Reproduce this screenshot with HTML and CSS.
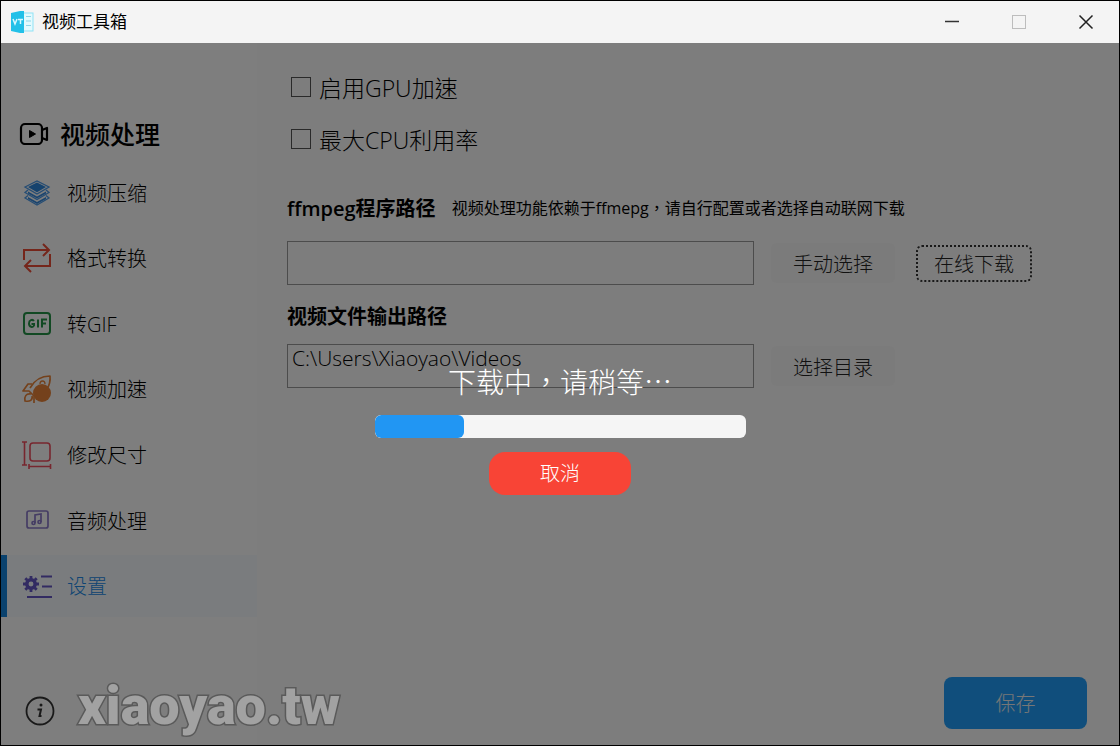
FILE: index.html
```html
<!DOCTYPE html>
<html lang="zh-Hant">
<head>
<meta charset="utf-8">
<meta name="viewport" content="width=device-width, initial-scale=1">
<title>视频工具箱</title>
<link rel="stylesheet" href="styles.css">
</head>
<body>
<div class="window">
  <header class="titlebar">
    <svg class="app-icon" viewBox="0 0 24 24" aria-hidden="true">
      <rect x="12" y="3" width="11" height="18" fill="#e4fafe" stroke="#8fe2f5"/>
      <path d="M16 6.500h5M16 11h5M16 15.500h5" fill="none" stroke="#8fd6e8"/>
      <path d="M1 3 10 1h4v22h-4L1 21z" fill="#22c0e8"/>
      <path d="m3 9 2 5 2-5M8 9.500h5M10.500 9.500V14" fill="none" stroke="#d8f7ff" stroke-width="1.500"/>
    </svg>
    <span class="app-name">视频工具箱</span>
    <div class="window-controls">
      <button class="control" type="button" aria-label="最小化"><svg viewBox="0 0 16 16"><path d="M1 7.500h14" stroke="#333" stroke-width="1.500"/></svg></button>
      <button class="control" type="button" aria-label="最大化" disabled><svg viewBox="0 0 16 16"><rect x="1.500" y="1.500" width="13" height="13" fill="none" stroke="#bdbdbd"/></svg></button>
      <button class="control" type="button" aria-label="关闭"><svg viewBox="0 0 16 16"><path d="m1.500 1.500 13 13m0-13-13 13" stroke="#222" stroke-width="1.500"/></svg></button>
    </div>
  </header>

  <div class="body">
    <aside class="sidebar">
      <h1 class="brand">
        <svg class="brand-icon" viewBox="0 0 32 24" fill="none" stroke="#000" stroke-width="2.200" aria-hidden="true">
          <rect x="3" y="3" width="21" height="20" rx="4"/>
          <path d="m24 9 5-2v12l-5-2" stroke-linejoin="round"/>
          <path d="m11.500 9.500 6 3.500-6 3.500z" fill="#000" stroke-width="1"/>
        </svg>
        视频处理
      </h1>
      <nav class="nav">
        <a class="nav-item" href="#compress">
          <svg class="nav-icon" viewBox="0 0 30 30" fill="none" stroke="#4c9ae8" stroke-width="1.300" aria-hidden="true">
            <path d="m3 10 12-6 12 6-12 7z"/><path d="m6 10 9-4.500 9 4.500-9 5.200z" fill="#2d86dd" stroke="none"/>
            <path d="m6 13-3 2.500 12 7 12-7-3-2.500" /><path d="m6 14.500 9 5 9-5v2l-9 5-9-5z" fill="#3689dc" stroke="none"/>
            <path d="m6 18.500-3 2.500 12 7 12-7-3-2.500"/><path d="m6 20 9 5 9-5v2l-9 5-9-5z" fill="#3689dc" stroke="none"/>
          </svg>
          视频压缩
        </a>
        <a class="nav-item" href="#convert">
          <svg class="nav-icon" viewBox="0 0 30 30" fill="none" stroke="#ea4c36" stroke-width="2" aria-hidden="true">
            <path d="M2 17V7h25M21 1l6 6-6 6M28 11v12H3M9 17l-6 6 6 6"/>
          </svg>
          格式转换
        </a>
        <a class="nav-item" href="#gif">
          <svg class="nav-icon" viewBox="0 0 30 30" fill="none" stroke="#259347" stroke-width="2" aria-hidden="true">
            <rect x="2" y="5" width="26" height="21" rx="3"/>
            <path d="M12 13c-1.500-2-5-1.200-5 2.500s4 4.500 5 2V16H9.500M16 11.500v8M20 19.500v-8h5M20 15.500h4"/>
          </svg>
          转GIF
        </a>
        <a class="nav-item" href="#speed">
          <svg class="nav-icon" viewBox="0 0 30 30" fill="none" stroke="#e88338" stroke-width="1.700" stroke-linejoin="round" aria-hidden="true">
            <path d="M8 14c4-7 11-12 20-12 .5 5-.5 9-3 13"/>
            <path d="M10 10H6l-5 7h6l5 5v7"/>
            <circle cx="20" cy="19" r="9" fill="#e88338" stroke="none"/>
            <path d="M18 10c0-4 5-4 5 0" stroke-width="1.300"/>
            <path d="M9 20c-5-1-7 3-6 7 5 1 8-1 7-5"/>
          </svg>
          视频加速
        </a>
        <a class="nav-item" href="#resize">
          <svg class="nav-icon" viewBox="0 0 30 30" fill="none" stroke="#ee4c5c" stroke-width="1.600" aria-hidden="true">
            <rect x="8" y="3" width="20" height="18" rx="3"/>
            <path d="M0 2h5M0 25h5M2.500 2v23M7 24v5M28.500 24v5M7 26.500h21"/>
          </svg>
          修改尺寸
        </a>
        <a class="nav-item" href="#audio">
          <svg class="nav-icon" viewBox="0 0 30 30" fill="none" stroke="#8b7ac8" stroke-width="1.700" aria-hidden="true">
            <rect x="5" y="6" width="21" height="17" rx="2"/>
            <path d="M13 18v-8l6-1v8"/><circle cx="11.500" cy="18" r="1.500"/><circle cx="17.500" cy="17" r="1.500"/>
          </svg>
          音频处理
        </a>
        <a class="nav-item is-active" href="#settings" aria-current="page">
          <svg class="nav-icon" viewBox="0 0 30 30" fill="none" stroke="#6457c4" stroke-width="2" aria-hidden="true">
            <circle cx="9" cy="13" r="4.200" stroke-width="3.500"/>
            <path d="M9 5v3M9 18v3M1 13h3M14 13h3M3.300 7.300l2 2M12.700 16.700l2 2M14.700 7.300l-2 2M5.300 16.700l-2 2" stroke-width="2.800"/>
            <path d="M19 5.500h11M20 15.500h10M5 26h25"/>
          </svg>
          设置
        </a>
      </nav>
      <div class="sidebar-footer">
        <button class="info" type="button" aria-label="关于">
          <svg viewBox="0 0 30 30" fill="none" stroke="#333" stroke-width="1.800" aria-hidden="true">
            <circle cx="15" cy="15" r="13.500"/>
            <circle cx="16" cy="9" r="1.500" fill="#333" stroke="none"/>
            <path d="M12.500 13.500H16l-1.500 6.500h2" stroke-width="2"/>
          </svg>
        </button>
      </div>
    </aside>

    <main class="main">
      <div class="options">
        <label class="check"><input type="checkbox">启用GPU加速</label>
        <label class="check"><input type="checkbox">最大CPU利用率</label>
      </div>

      <div class="field">
        <div class="field-head">
          <label class="field-title" for="ffmpeg">ffmpeg程序路径</label>
          <span class="field-hint">视频处理功能依赖于ffmepg，请自行配置或者选择自动联网下载</span>
        </div>
        <div class="field-row">
          <input class="path" id="ffmpeg" type="text">
          <button class="plain" type="button">手动选择</button>
          <button class="plain is-focused" type="button">在线下载</button>
        </div>
      </div>

      <div class="field">
        <div class="field-head">
          <label class="field-title" for="output">视频文件输出路径</label>
        </div>
        <div class="field-row">
          <input class="path" id="output" type="text" value="C:\Users\Xiaoyao\Videos">
          <button class="plain" type="button">选择目录</button>
        </div>
      </div>

      <button class="save" type="button">保存</button>
    </main>

    <div class="overlay" role="dialog" aria-labelledby="status">
      <label class="status" id="status" for="download">下载中，请稍等…</label>
      <progress class="bar" id="download" max="100" value="24"></progress>
      <button class="cancel" type="button">取消</button>
    </div>
    <div class="watermark">xiaoyao.tw</div>
  </div>
</div>
</body>
</html>
```

FILE: styles.css
```css
* {
  box-sizing: border-box;
}

body {
  margin: 0;
  font-family: "Open Sans", "Noto Sans CJK TC", sans-serif;
  font-weight: 300;
  font-size: 20px;
  color: #000;
}

button,
input {
  font: inherit;
  color: inherit;
}

button {
  padding: 0;
  border: 0;
  background: none;
}

.window {
  display: flex;
  flex-direction: column;
  min-height: 100vh;
  border: 1px solid #000;
  background: #fafafa;
}

.titlebar {
  display: flex;
  align-items: center;
  gap: 8px;
  height: 42px;
  padding-left: 9px;
  background: #f4f4f4;
}

.app-icon {
  width: 24px;
  height: 24px;
}

.app-name {
  padding-bottom: 3px;
  font-size: 17px;
  font-weight: 400;
}

.window-controls {
  display: flex;
  align-self: stretch;
  margin-left: auto;
}

.control {
  display: grid;
  place-items: center;
  width: 67px;
}

.control svg {
  width: 16px;
  height: 16px;
}

.body {
  position: relative;
  flex: 1;
  display: flex;
}

/* Sidebar */

.sidebar {
  display: flex;
  flex-direction: column;
  flex: none;
  width: 256px;
  padding-top: 70px;
  background: #fdfdfd;
}

.brand {
  display: flex;
  align-items: center;
  gap: 10px;
  height: 40px;
  margin: 0 0 8px;
  padding-left: 17px;
  font-size: 25px;
  font-weight: 500;
}

.brand-icon {
  width: 32px;
  height: 24px;
}

.nav {
  flex: 1;
  display: flex;
  flex-direction: column;
  justify-content: space-between;
}

.nav-item {
  display: flex;
  align-items: center;
  gap: 15px;
  height: 62px;
  padding-left: 15px;
  border-left: 6px solid transparent;
  color: #000;
  text-decoration: none;
}

.nav-item.is-active {
  border-left-color: #1585dc;
  background: #f4f9fd;
  color: #2189e6;
}

.nav-icon {
  flex: none;
  width: 30px;
  height: 30px;
}

.sidebar-footer {
  height: 128px;
  padding: 79px 0 0 24px;
}

.info svg {
  display: block;
  width: 30px;
  height: 30px;
}

/* Settings form */

.main {
  flex: 1;
  display: flex;
  flex-direction: column;
  min-width: 0;
  padding: 28px 32px 16px 30px;
}

.options {
  display: grid;
  justify-items: start;
  gap: 20px;
  margin-bottom: 36px;
  padding-left: 4px;
}

.check {
  display: flex;
  align-items: center;
  gap: 8px;
  height: 32px;
  font-size: 23px;
}

.check input {
  appearance: none;
  width: 20px;
  height: 20px;
  margin: 0;
  border: 1px solid #555;
}

.field {
  margin-bottom: 14px;
}

.field-head {
  display: flex;
  align-items: center;
  gap: 16px;
  height: 32px;
  margin-bottom: 18px;
}

.field + .field .field-head {
  margin-bottom: 13px;
}

.field-title {
  font-weight: 600;
}

.field-hint {
  font-size: 16px;
  font-weight: 400;
}

.field-row {
  display: flex;
  align-items: center;
  gap: 17px;
}

.path {
  flex: 0 1 467px;
  min-width: 0;
  height: 44px;
  padding: 0 4px 16px;
  border: 1px solid #999;
  border-radius: 0;
  background: transparent;
  font-size: 21px;
}

.plain {
  width: 124px;
  height: 40px;
  border-radius: 6px;
  background: #f6f6f6;
  color: #222;
}

.plain.is-focused {
  width: 116px;
  height: 37px;
  margin-left: 4px;
  border: 2px dotted #333;
  background: transparent;
}

.save {
  align-self: flex-end;
  width: 143px;
  height: 52px;
  margin-top: auto;
  padding-bottom: 2px;
  border-radius: 8px;
  background: #209df8;
  color: #eee;
}

/* Download overlay */

.overlay {
  position: absolute;
  inset: 0;
  display: flex;
  flex-direction: column;
  align-items: center;
  justify-content: center;
  gap: 14px;
  padding-top: 68px;
  background: rgba(0, 0, 0, 0.5);
}

.status {
  color: #fff;
  font-family: "Noto Sans CJK TC", sans-serif;
  font-size: 28px;
  line-height: 40px;
}

.bar {
  appearance: none;
  width: 371px;
  height: 23px;
  border: 0;
  border-radius: 6px;
  overflow: hidden;
  background: #f5f5f5;
}

.bar::-webkit-progress-bar {
  background: #f5f5f5;
}

.bar::-webkit-progress-value {
  border-radius: 6px;
  background: #2196f3;
}

.cancel {
  width: 142px;
  height: 43px;
  padding-bottom: 2px;
  border-radius: 16px;
  background: #f84436;
  color: #fff;
}

.watermark {
  position: absolute;
  left: 77px;
  bottom: 5px;
  color: #a2a2a2;
  font-family: Roboto, Arial, sans-serif;
  font-size: 54px;
  font-weight: 900;
  line-height: 68px;
  -webkit-text-stroke: 3px #5a5a5a;
  paint-order: stroke fill;
  pointer-events: none;
}
```
